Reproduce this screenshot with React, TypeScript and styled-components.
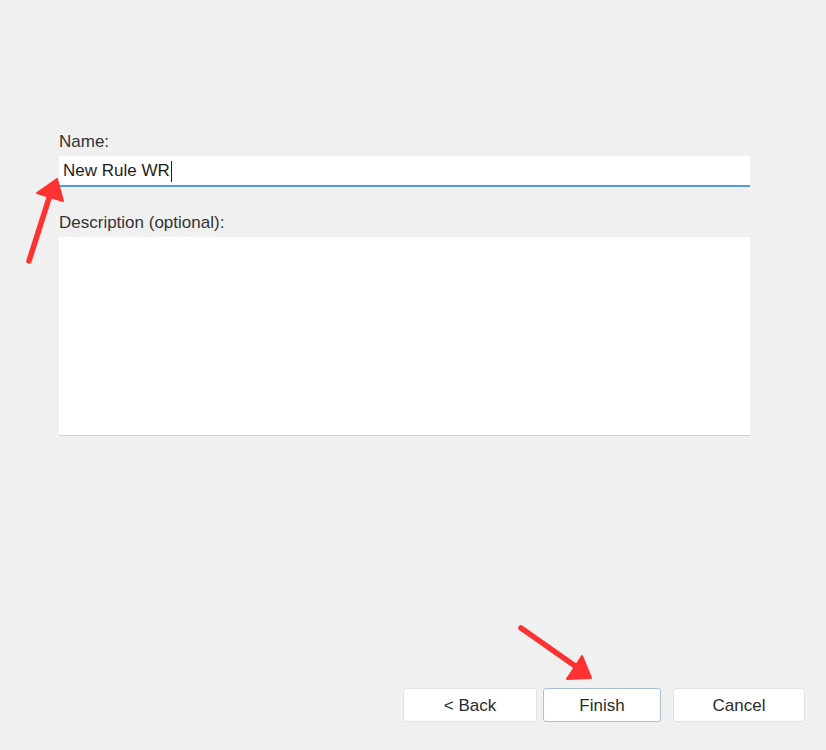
import React from 'react';
import styled, { createGlobalStyle } from 'styled-components';

const GlobalStyle = createGlobalStyle`
  html, body {
    margin: 0;
    padding: 0;
    background: #f0f0f0;
  }
  body {
    font-family: 'Liberation Sans', Arial, sans-serif;
  }
`;

const buttons = [
  { label: '< Back', width: 134, focused: false },
  { label: 'Finish', width: 118, focused: true },
  { label: 'Cancel', width: 132, focused: false },
];

function App() {
  return (
    <>
      <GlobalStyle />
      <Page>
        <Form>
          <Label>Name:</Label>
          <NameField>
            <FieldText>New Rule WR</FieldText>
            <Caret />
          </NameField>

          <Label $top={25}>Description (optional):</Label>
          <DescriptionField />
        </Form>

        <Footer>
          {buttons.map((b) => (
            <Button key={b.label} $width={b.width} $focused={b.focused}>
              {b.label}
            </Button>
          ))}
        </Footer>

        <Annotations width="826" height="750" viewBox="0 0 826 750">
          {/* arrow pointing at the name field */}
          <line x1="29" y1="261" x2="50" y2="195" stroke="#ff3131" strokeWidth="5.5" strokeLinecap="round" />
          <polygon points="57,179 37,193 63,201" fill="#ff3131" stroke="#ff3131" strokeWidth="2" strokeLinejoin="round" />
          {/* arrow pointing at finish */}
          <line x1="521" y1="628" x2="578" y2="668" stroke="#ff3131" strokeWidth="5.5" strokeLinecap="round" />
          <polygon points="591,678 567,679 582,656" fill="#ff3131" stroke="#ff3131" strokeWidth="2" strokeLinejoin="round" />
        </Annotations>
      </Page>
    </>
  );
}

const Page = styled.div`
  position: relative;
  width: 826px;
  height: 750px;
  background: #f0f0f0;
  display: flex;
  flex-direction: column;
  overflow: hidden;
`;

const Form = styled.div`
  display: flex;
  flex-direction: column;
  padding: 131px 76px 0 59px;
`;

const Label = styled.div<{ $top?: number }>`
  margin-top: ${(p) => p.$top || 0}px;
  font-size: 17px;
  line-height: 22px;
  color: #333;
  margin-bottom: 3px;
`;

const NameField = styled.div`
  box-sizing: border-box;
  height: 31px;
  background: #fff;
  border-bottom: 2px solid #5b9bd5;
  display: flex;
  align-items: center;
  padding: 1px 0 0 4px;
`;

const FieldText = styled.span`
  font-size: 17px;
  color: #1e1e1e;
  line-height: 22px;
`;

const Caret = styled.span`
  width: 1.5px;
  height: 21px;
  margin-left: 1px;
  background: #1a1a1a;
`;

const DescriptionField = styled.div`
  height: 198px;
  background: #fff;
  border-bottom: 1px solid #c9d3dc;
`;

const Footer = styled.div`
  margin-top: auto;
  display: flex;
  justify-content: flex-end;
  gap: 6px;
  padding: 0 21px 28px 0;

  & > :last-child {
    margin-left: 6px;
  }
`;

const Button = styled.div<{ $width: number; $focused: boolean }>`
  width: ${(p) => p.$width}px;
  height: 34px;
  box-sizing: border-box;
  display: flex;
  align-items: center;
  justify-content: center;
  padding-top: 2px;
  background: #fff;
  border: ${(p) => (p.$focused ? '1.5px solid #a8c1d6' : '1px solid #e2e2e2')};
  border-radius: 3px;
  font-size: 17px;
  color: #2b2b2b;
`;

const Annotations = styled.svg`
  position: absolute;
  left: 0;
  top: 0;
  pointer-events: none;
`;

export default App;
